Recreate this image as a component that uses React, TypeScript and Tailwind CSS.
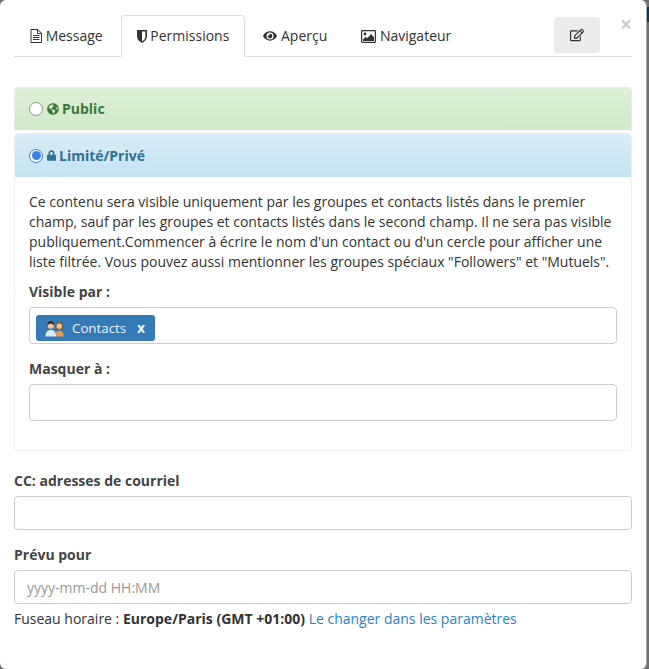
import { FaEye, FaGlobeAmericas, FaLock, FaRegEdit } from "react-icons/fa";

function FileIcon() {
  return (
    <svg viewBox="0 0 12 14" className="w-[12px] h-[14px]" fill="none" stroke="#333" strokeWidth="1">
      <path d="M1 .5h6.800L11.500 4.200V13.500H1z" />
      <path d="M7.500 .5V4.500H11.500" />
      <path d="M3 6.500h6.500M3 8.500h6.500M3 10.500h6.500" />
    </svg>
  );
}

function ShieldIcon() {
  return (
    <svg viewBox="0 0 10 13" className="w-[10px] h-[13px]">
      <path
        fill="#333"
        fillRule="evenodd"
        d="M0 0h10v6.600c0 3-2.600 5.200-5 6.400C2.600 11.800 0 9.600 0 6.600zM5 1.600v9.700c1.800-1 3.400-2.600 3.400-4.600V1.600z"
      />
    </svg>
  );
}

function PictureIcon() {
  return (
    <svg viewBox="0 0 15 13" className="w-[15px] h-[13px]">
      <rect x=".6" y=".6" width="13.800" height="11.800" rx=".8" fill="none" stroke="#333" strokeWidth="1.200" />
      <circle cx="4" cy="4" r="1.400" fill="#333" />
      <path fill="#333" d="M2 11V9.300l2.800-2.500 1.500 1.400 3.700-4.200 3 3.300V11z" />
    </svg>
  );
}

function ContactsIcon() {
  return (
    <svg viewBox="0 0 19 17" className="w-[19px] h-[17px]">
      <path fill="#8a5a2c" d="M10.500 10c-.3-5 1-8.500 3.800-8.500s4.200 3.500 3.800 8.500z" />
      <path fill="#e69a4c" d="M10.500 16.500c0-4 1.500-6 3.800-6s4.500 2 4.500 6z" />
      <circle cx="14.300" cy="6.300" r="2.700" fill="#f3c79a" />
      <path fill="#d4ebf7" d="M.5 16.500c0-4.500 2-6.500 5.300-6.500s5.300 2 5.300 6.500z" />
      <circle cx="5.800" cy="5.500" r="3.200" fill="#f0c6a0" />
      <path fill="#3f2a1a" d="M2.500 6C2 2.500 3.800 1 5.800 1s3.800 1.500 3.300 5C8.500 4.300 7 3.700 5.800 3.700S3.100 4.300 2.500 6z" />
    </svg>
  );
}

function Tab({ icon, label, active }: { icon: React.ReactNode; label: string; active?: boolean }) {
  return (
    <div
      className={
        active
          ? "h-[42px] -mb-px px-[15px] flex items-center gap-[3.64px] mr-[2px] bg-white border border-[#ddd] border-b-white rounded-t-[4px]"
          : "h-[42px] -mb-px px-[16px] flex items-center gap-[3.64px] mr-[2px]"
      }
    >
      {icon}
      <span>{label}</span>
    </div>
  );
}

export default function App() {
  return (
    <div className="relative w-[649px] h-[669px] bg-[#6e6e6e] font-['Open_Sans',sans-serif] text-[14px] leading-[20px] text-[#333]">
      <div className="absolute right-0 top-[7px] w-[2px] h-[15px] bg-[#0f3a4d]" />
      <div className="w-[647px] h-[669px] bg-white border-r border-[#a8a8a8] rounded-[6px] pl-[14px] pr-[14px] pt-[15px]">
        <div className="relative w-[618px] flex items-start border-b border-[#ddd] h-[42px]">
          <Tab icon={<FileIcon />} label="Message" />
          <Tab icon={<ShieldIcon />} label="Permissions" active />
          <Tab icon={<FaEye className="w-[14px] h-[14px]" />} label="Aperçu" />
          <Tab icon={<PictureIcon />} label="Navigateur" />
          <div className="absolute left-[540px] top-[2px] w-[46px] h-[36px] bg-[#ebebeb] rounded-[4px] flex items-center justify-center">
            <FaRegEdit className="text-[14px]" />
          </div>
          <span className="absolute left-[606px] -top-[1px] font-bold text-[21px] leading-[21px] text-[#000] opacity-20">×</span>
        </div>

        <div className="mt-[30px] w-[618px]">
          <div className="h-[43px] flex items-center pl-[14px] bg-gradient-to-b from-[#dff0d8] to-[#d0e9c6] border border-[#ebebeb] border-b-0 rounded-t-[4px] text-[#3c763d]">
            <span className="w-[14px] h-[14px] rounded-full border border-[#8f8f8f] bg-white" />
            <FaGlobeAmericas className="w-[12px] h-[12px] ml-[4px]" />
            <span className="ml-[3px] font-bold">Public</span>
          </div>
          <div className="mt-[3px] border border-[#f0f0f0] rounded-[4px]">
            <div className="h-[43px] flex items-center pl-[14px] bg-gradient-to-b from-[#d9edf7] to-[#c4e3f3] rounded-t-[4px] text-[#31708f]">
              <span className="w-[14px] h-[14px] rounded-full border border-[#3b82e6] bg-white flex items-center justify-center">
                <span className="w-[9px] h-[9px] rounded-full bg-[#3b82e6]" />
              </span>
              <FaLock className="w-[9px] h-[11px] ml-[4px]" />
              <span className="ml-[3px] font-bold">Limité/Privé</span>
            </div>
            <div className="px-[14px] pt-[15px] h-[273px]">
              <p>
                Ce contenu sera visible uniquement par les groupes et contacts listés dans le premier champ, sauf par les groupes et contacts listés dans le second champ. Il ne sera pas visible publiquement.Commencer à écrire le nom d'un contact ou d'un cercle pour afficher une liste filtrée. Vous pouvez aussi mentionner les groupes spéciaux "Followers" et "Mutuels".
              </p>
              <div className="mt-[10px] font-bold text-[#444]">Visible par :</div>
              <div className="mt-[5px] h-[37px] border border-[#ccc] rounded-[4px] flex items-start pt-[7px] pl-[6px]">
                <div className="h-[26px] w-[119px] bg-[#337ab7] rounded-[3px] flex items-center pl-[9px] text-[#eef4fa] text-[13.3px]">
                  <ContactsIcon />
                  <span className="ml-[8px]">Contacts</span>
                  <span className="ml-[11px] font-bold text-[14px]">x</span>
                </div>
              </div>
              <div className="mt-[15px] font-bold text-[#444]">Masquer à :</div>
              <div className="mt-[5px] h-[37px] border border-[#ccc] rounded-[4px]" />
            </div>
          </div>
        </div>

        <div className="w-[618px] mt-[20px] font-bold text-[#444]">CC: adresses de courriel</div>
        <input className="block w-[618px] mt-[5px] h-[34px] border border-[#ccc] rounded-[4px]" />
        <div className="w-[618px] mt-[15px] font-bold text-[#444]">Prévu pour</div>
        <input
          placeholder="yyyy-mm-dd HH:MM"
          className="block w-[618px] mt-[5px] h-[34px] border border-[#ccc] rounded-[4px] px-[12px] placeholder:text-[#999]"
        />
        <div className="w-[618px] mt-[5px]">
          Fuseau horaire : <b>Europe/Paris (GMT +01:00)</b> <span className="text-[#1f84c6]">Le changer dans les paramètres</span>
        </div>
      </div>
    </div>
  );
}
